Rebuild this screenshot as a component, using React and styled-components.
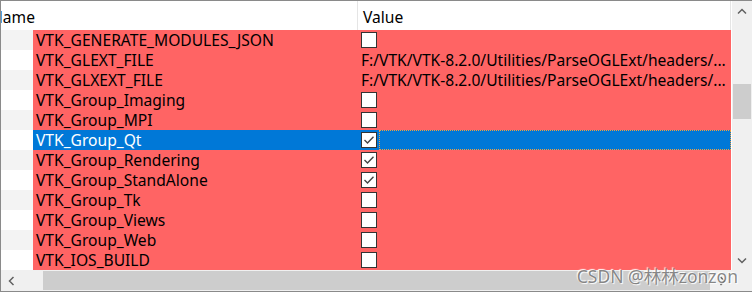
import React from "react";
import styled, { createGlobalStyle } from "styled-components";

const GlobalStyle = createGlobalStyle`
  body {
    margin: 0;
    background: #fff;
    font-family: "Noto Sans", "Open Sans", sans-serif;
  }
`;

const ELLIPSIS_PATH = "F:/VTK/VTK-8.2.0/Utilities/ParseOGLExt/headers/...";

// cache entries shown in the list
const entries = [
  { name: "VTK_GENERATE_MODULES_JSON", bool: true, checked: false },
  { name: "VTK_GLEXT_FILE", value: ELLIPSIS_PATH },
  { name: "VTK_GLXEXT_FILE", value: ELLIPSIS_PATH },
  { name: "VTK_Group_Imaging", bool: true, checked: false },
  { name: "VTK_Group_MPI", bool: true, checked: false },
  { name: "VTK_Group_Qt", bool: true, checked: true, selected: true },
  { name: "VTK_Group_Rendering", bool: true, checked: true },
  { name: "VTK_Group_StandAlone", bool: true, checked: true },
  { name: "VTK_Group_Tk", bool: true, checked: false },
  { name: "VTK_Group_Views", bool: true, checked: false },
  { name: "VTK_Group_Web", bool: true, checked: false },
  { name: "VTK_IOS_BUILD", bool: true, checked: false },
];

const Chevron = ({ dir }) => {
  const paths = {
    up: "M1 5.5 L5 1.5 L9 5.5",
    down: "M1 1.5 L5 5.5 L9 1.5",
    left: "M5.5 1 L1.5 5 L5.5 9",
    right: "M1.5 1 L5.5 5 L1.5 9",
  };
  const vertical = dir === "up" || dir === "down";
  return (
    <svg
      width={vertical ? 10 : 7}
      height={vertical ? 7 : 10}
      viewBox={vertical ? "0 0 10 7" : "0 0 7 10"}
      fill="none"
      stroke="#606060"
      strokeWidth="1.5"
    >
      <path d={paths[dir]} />
    </svg>
  );
};

const CheckBox = ({ checked }) => (
  <Box>
    {checked && (
      <svg width="14" height="14" viewBox="0 0 14 14" fill="none">
        <path d="M2.5 7 L5.5 10 L11.5 3.8" stroke="#444" strokeWidth="1.4" />
      </svg>
    )}
  </Box>
);

const App = () => {
  return (
    <>
      <GlobalStyle />
      <Frame>
        <Viewport>
          <Table>
            <HeaderRow>
              <HeaderCell $pad={4}>Name</HeaderCell>
              <HeaderCell $pad={5}>Value</HeaderCell>
            </HeaderRow>
            {entries.map((e, i) => (
              <Row key={e.name}>
                <Gutter $alt={i % 2 === 0} />
                <NameCell $selected={e.selected}>{e.name}</NameCell>
                <ValueCell $selected={e.selected}>
                  {e.bool ? <CheckBox checked={e.checked} /> : e.value}
                  {e.selected && <FocusRect />}
                </ValueCell>
              </Row>
            ))}
          </Table>
        </Viewport>

        <VScroll>
          <ArrowButton>
            <Chevron dir="up" />
          </ArrowButton>
          <Track>
            <VThumb $offset={63} $size={35} />
          </Track>
          <ArrowButton>
            <Chevron dir="down" />
          </ArrowButton>
        </VScroll>

        <HScroll>
          <ArrowButton>
            <Chevron dir="left" />
          </ArrowButton>
          <HTrack>
            <HThumb $offset={22} $size={667} />
          </HTrack>
          <ArrowButton>
            <Chevron dir="right" />
          </ArrowButton>
        </HScroll>
        <Corner />

        <Watermark>CSDN @林林zonzon</Watermark>
      </Frame>
    </>
  );
};

// outer list widget
const Frame = styled.div`
  position: relative;
  width: 752px;
  height: 292px;
  box-sizing: border-box;
  border: 1px solid #8a8a8a;
  border-right: none;
  display: grid;
  grid-template-columns: 1fr 20px;
  grid-template-rows: 1fr 21px;
  background: #fff;
  font-size: 15.6px;
  color: #000;
`;

const Viewport = styled.div`
  overflow: hidden;
`;

// content is scrolled 14px to the right
const Table = styled.div`
  margin-left: -14px;
  width: 744px;
`;

const HeaderRow = styled.div`
  display: grid;
  grid-template-columns: 371px 1fr;
  height: 29px;
  background: #fff;
`;

const HeaderCell = styled.div`
  display: flex;
  align-items: center;
  padding: 2px 0 0 ${(p) => p.$pad}px;
  border-right: 1px solid #e5e5e5;
  white-space: nowrap;
`;

const Row = styled.div`
  display: grid;
  grid-template-columns: 46px 324px 374px;
  height: 20px;
  line-height: 20px;
`;

const Gutter = styled.div`
  background: ${(p) => (p.$alt ? "#f3f3f3" : "#fff")};
`;

const NameCell = styled.div`
  padding-left: 3px;
  background: ${(p) => (p.$selected ? "#0078d7" : "#ff6464")};
  color: ${(p) => (p.$selected ? "#fff" : "#000")};
  white-space: nowrap;
  overflow: hidden;
`;

const ValueCell = styled.div`
  display: flex;
  align-items: center;
  gap: 2px;
  padding-left: 4px;
  background: ${(p) => (p.$selected ? "#0078d7" : "#ff6464")};
  white-space: nowrap;
  overflow: hidden;
`;

const Box = styled.span`
  width: 16px;
  height: 16px;
  box-sizing: border-box;
  border: 1px solid #333;
  background: #fff;
  display: flex;
  align-items: center;
  justify-content: center;
  flex-shrink: 0;
`;

const FocusRect = styled.span`
  flex: 1;
  align-self: stretch;
  border: 1px dotted #f0a040;
`;

const VScroll = styled.div`
  background: #f0f0f0;
  display: flex;
  flex-direction: column;
`;

const HScroll = styled.div`
  background: #f0f0f0;
  display: flex;
`;

const ArrowButton = styled.div`
  width: 20px;
  height: 20px;
  flex-shrink: 0;
  display: flex;
  align-items: center;
  justify-content: center;
  align-self: flex-end;
`;

const Track = styled.div`
  flex: 1;
  padding: 0 1px;
`;

const HTrack = styled.div`
  flex: 1;
  padding-top: 1px;
`;

const VThumb = styled.div`
  margin-top: ${(p) => p.$offset}px;
  height: ${(p) => p.$size}px;
  background: #cdcdcd;
`;

const HThumb = styled.div`
  margin-left: ${(p) => p.$offset}px;
  width: ${(p) => p.$size}px;
  height: 19px;
  background: #cdcdcd;
`;

const Corner = styled.div`
  background: #f0f0f0;
`;

const Watermark = styled.div`
  position: absolute;
  right: 14px;
  bottom: 3px;
  font-family: "Noto Sans", "Noto Sans CJK SC", sans-serif;
  font-size: 17.5px;
  color: rgba(115, 115, 115, 0.85);
  text-shadow: 1px 1px 1px #fff, -1px -1px 1px #fff;
  white-space: nowrap;
  pointer-events: none;
`;

export default App;
